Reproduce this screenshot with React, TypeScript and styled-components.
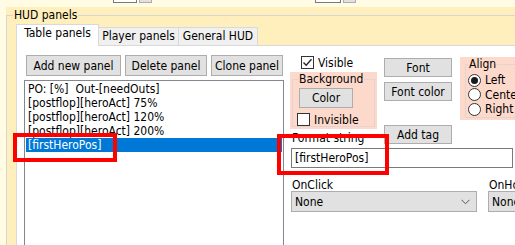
import React from 'react';
import styled, { createGlobalStyle } from 'styled-components';

const FONT = `Tahoma, "DejaVu Sans Condensed", "Liberation Sans", sans-serif`;

const GlobalStyle = createGlobalStyle`
  html, body { margin: 0; padding: 0; background: #fffce3; }
  body { font-family: ${FONT}; font-size: 12px; color: #000; }
  * { box-sizing: border-box; }
`;

const Screen = styled.div`
  position: relative;
  width: 515px;
  height: 245px;
  overflow: hidden;
  background: #fffce3;
  display: flex;
  flex-direction: column;
`;

const TopStrip = styled.div`
  height: 7px;
  flex: none;
  display: flex;
  align-items: flex-start;
`;

const TopControls = styled.div<{ $ml: number }>`
  display: flex;
  gap: 2px;
  margin-top: -17px;
  margin-left: ${(p) => p.$ml}px;
`;

const MiniInput = styled.div<{ $w: number }>`
  width: ${(p) => p.$w}px;
  height: 20px;
  background: #fff;
  border: 1px solid #7a7a7a;
`;

const MiniButton = styled.div`
  width: 13px;
  height: 20px;
  background: #e1e1e1;
  border: 1px solid #adadad;
`;

const GroupWrap = styled.div`
  flex: 1;
  min-height: 0;
  margin-left: 6px;
  background: #ffefbc;
  padding-top: 1px;
  display: flex;
`;

const Group = styled.fieldset`
  flex: 1;
  min-width: 0;
  margin: 0;
  padding: 0;
  border: 1px solid #d6d6d6;
  border-right: none;
  border-bottom: none;
  display: flex;
  flex-direction: column;
`;

const Legend = styled.legend<{ $ml: number }>`
  margin-left: ${(p) => p.$ml}px;
  padding: 0 1px;
  line-height: 14px;
  font-size: 12px;
`;

const GroupBody = styled.div`
  flex: 1;
  display: flex;
  flex-direction: column;
  padding-left: 9px;
`;

const TabStrip = styled.div`
  display: flex;
  align-items: flex-end;
  height: 21px;
  margin-top: 2px;
  flex: none;
`;

const Tab = styled.div<{ $active?: boolean; $w: number }>`
  position: relative;
  z-index: ${(p) => (p.$active ? 2 : 1)};
  width: ${(p) => p.$w}px;
  height: ${(p) => (p.$active ? 22 : 18)}px;
  margin-bottom: ${(p) => (p.$active ? -1 : 0)}px;
  margin-left: -1px;
  &:first-child { margin-left: 0; }
  background: ${(p) => (p.$active ? '#ffffff' : '#f0f0f0')};
  border: 1px solid #d9d9d9;
  border-bottom: none;
  line-height: 17px;
  text-align: center;
  white-space: nowrap;
`;

const TabPage = styled.div`
  flex: 1;
  background: #fff;
  border-top: 1px solid #d9d9d9;
  border-left: 1px solid #d9d9d9;
  display: flex;
  align-items: flex-start;
  gap: 6px;
  padding: 0 0 0 7px;
`;

const LeftCol = styled.div`
  width: 260px;
  flex: none;
  display: flex;
  flex-direction: column;
  padding-top: 9px;
`;

const ButtonRow = styled.div`
  display: flex;
  gap: 4px;
  padding-left: 2px;
`;

const Button = styled.div<{ $w: number; $h?: number }>`
  width: ${(p) => p.$w}px;
  height: ${(p) => p.$h ?? 21}px;
  background: #e1e1e1;
  border: 1px solid #adadad;
  display: flex;
  align-items: center;
  justify-content: center;
  white-space: nowrap;
  flex: none;
`;

const ListBox = styled.div`
  margin-top: 4px;
  height: 200px;
  border: 1px solid #828790;
  padding: 1px;
  flex: none;
`;

const ListItem = styled.div<{ $selected?: boolean }>`
  height: 14px;
  line-height: 14px;
  padding-left: 2px;
  white-space: pre;
  background: ${(p) => (p.$selected ? '#0078d7' : 'transparent')};
  color: ${(p) => (p.$selected ? '#fff' : '#000')};
`;

const RightCol = styled.div`
  width: 240px;
  flex: none;
  display: flex;
  flex-direction: column;
`;

const TopRow = styled.div`
  display: flex;
  align-items: flex-start;
`;

const ColA = styled.div`
  width: 87px;
  flex: none;
  display: flex;
  flex-direction: column;
`;

const ColB = styled.div`
  width: 68px;
  flex: none;
  margin-left: 7px;
  display: flex;
  flex-direction: column;
`;

const ColC = styled.div`
  flex: none;
  margin-left: 8px;
  margin-top: 11px;
`;

const CheckRow = styled.div<{ $mt: number; $pl: number }>`
  display: flex;
  align-items: center;
  gap: 4px;
  height: 13px;
  margin-top: ${(p) => p.$mt}px;
  padding-left: ${(p) => p.$pl}px;
  white-space: nowrap;
`;

const CheckBox = styled.div`
  width: 13px;
  height: 13px;
  border: 1px solid #333;
  background: #fff;
  flex: none;
  display: flex;
  align-items: center;
  justify-content: center;
`;

const Salmon = styled.div<{ $mt: number; $w: number; $pl: number }>`
  margin-top: ${(p) => p.$mt}px;
  width: ${(p) => p.$w}px;
  background: #fdd9cb;
  padding: 0 2px 2px ${(p) => p.$pl}px;
`;

const SubGroup = styled.fieldset<{ $h: number }>`
  margin: 0;
  padding: 0;
  height: ${(p) => p.$h}px;
  border: 1px solid #e4d4d0;
  min-width: 0;
`;

const SubBody = styled.div<{ $pl: number }>`
  padding-left: ${(p) => p.$pl}px;
  display: flex;
  flex-direction: column;
`;

const Spaced = styled.div<{ $mt: number }>`
  margin-top: ${(p) => p.$mt}px;
`;

const RadioRow = styled.div`
  display: flex;
  align-items: center;
  gap: 4px;
  height: 14.5px;
  white-space: nowrap;
`;

const Radio = styled.div<{ $on?: boolean }>`
  width: 13px;
  height: 13px;
  border-radius: 50%;
  border: 1px solid #333;
  background: #fff;
  flex: none;
  display: flex;
  align-items: center;
  justify-content: center;
  &::after {
    content: '';
    display: ${(p) => (p.$on ? 'block' : 'none')};
    width: 7px;
    height: 7px;
    border-radius: 50%;
    background: #1a1a1a;
  }
`;

const Label = styled.div<{ $mt: number }>`
  margin-top: ${(p) => p.$mt}px;
  padding-left: 2px;
  line-height: 14px;
  white-space: nowrap;
`;

const TextBox = styled.div`
  margin-top: 3px;
  margin-left: 1px;
  width: 222px;
  height: 20px;
  border: 1px solid #7a7a7a;
  padding-left: 3px;
  line-height: 18px;
  background: #fff;
`;

const BottomRow = styled.div`
  display: flex;
  margin-top: 10px;
  margin-left: 1px;
`;

const Field = styled.div<{ $ml: number }>`
  display: flex;
  flex-direction: column;
  margin-left: ${(p) => p.$ml}px;
  flex: none;
`;

const FieldLabel = styled.div`
  line-height: 14px;
  padding-left: 1px;
  white-space: nowrap;
`;

const Select = styled.div<{ $w: number }>`
  margin-top: -1px;
  width: ${(p) => p.$w}px;
  height: 21px;
  background: #e1e1e1;
  border: 1px solid #adadad;
  display: flex;
  align-items: center;
  justify-content: space-between;
  padding: 0 6px 0 3px;
`;

const RedBox = styled.div<{ $x: number; $y: number; $w: number; $h: number }>`
  position: absolute;
  left: ${(p) => p.$x}px;
  top: ${(p) => p.$y}px;
  width: ${(p) => p.$w}px;
  height: ${(p) => p.$h}px;
  border: 4px solid #ff0000;
  pointer-events: none;
  z-index: 10;
`;

const Check = () => (
  <svg width="11" height="11" viewBox="0 0 11 11">
    <polyline points="1.5,5.5 4.2,8.3 9.5,2.2" fill="none" stroke="#222" strokeWidth="1.3" />
  </svg>
);

const Chevron = () => (
  <svg width="9" height="6" viewBox="0 0 9 6">
    <polyline points="0.5,0.8 4.5,4.8 8.5,0.8" fill="none" stroke="#555" strokeWidth="1" />
  </svg>
);

const items = [
  'PO: [%]  Out-[needOuts]',
  '[postflop][heroAct] 75%',
  '[postflop][heroAct] 120%',
  '[postflop][heroAct] 200%',
  '[firstHeroPos]',
];

export default function App() {
  return (
    <>
      <GlobalStyle />
      <Screen>
        <TopStrip>
          <TopControls $ml={113}>
            <MiniInput $w={24} />
            <MiniButton />
          </TopControls>
          <TopControls $ml={163}>
            <MiniInput $w={26} />
            <MiniButton />
          </TopControls>
        </TopStrip>
        <GroupWrap>
          <Group>
            <Legend $ml={6}>HUD panels</Legend>
            <GroupBody>
              <TabStrip>
                <Tab $active $w={83}>Table panels</Tab>
                <Tab $w={81}>Player panels</Tab>
                <Tab $w={80}>General HUD</Tab>
              </TabStrip>
              <TabPage>
                <LeftCol>
                  <ButtonRow>
                    <Button $w={95}>Add new panel</Button>
                    <Button $w={82}>Delete panel</Button>
                    <Button $w={72}>Clone panel</Button>
                  </ButtonRow>
                  <ListBox>
                    {items.map((t, i) => (
                      <ListItem key={i} $selected={i === items.length - 1}>
                        {t}
                      </ListItem>
                    ))}
                  </ListBox>
                </LeftCol>
                <RightCol>
                  <TopRow>
                    <ColA>
                      <CheckRow $mt={10} $pl={11}>
                        <CheckBox>
                          <Check />
                        </CheckBox>
                        Visible
                      </CheckRow>
                      <Salmon $mt={3} $w={87} $pl={2}>
                        <SubGroup $h={55}>
                          <Legend $ml={5}>Background</Legend>
                          <SubBody $pl={6}>
                            <Spaced $mt={2}>
                              <Button $w={54} $h={20}>Color</Button>
                            </Spaced>
                          </SubBody>
                          <CheckRow $mt={5} $pl={4}>
                            <CheckBox />
                            Invisible
                          </CheckRow>
                        </SubGroup>
                      </Salmon>
                      <Label $mt={2}>Format string</Label>
                    </ColA>
                    <ColB>
                      <Spaced $mt={12}>
                        <Button $w={68} $h={19}>Font</Button>
                      </Spaced>
                      <Spaced $mt={5}>
                        <Button $w={68} $h={19}>Font color</Button>
                      </Spaced>
                      <Spaced $mt={24}>
                        <Button $w={68} $h={19}>Add tag</Button>
                      </Spaced>
                    </ColB>
                    <ColC>
                      <Salmon $mt={0} $w={80} $pl={5}>
                        <SubGroup $h={61}>
                          <Legend $ml={2}>Align</Legend>
                          <SubBody $pl={2}>
                            <Spaced $mt={2}>
                              <RadioRow>
                                <Radio $on />
                                Left
                              </RadioRow>
                              <RadioRow>
                                <Radio />
                                Center
                              </RadioRow>
                              <RadioRow>
                                <Radio />
                                Right
                              </RadioRow>
                            </Spaced>
                          </SubBody>
                        </SubGroup>
                      </Salmon>
                    </ColC>
                  </TopRow>
                  <TextBox>[firstHeroPos]</TextBox>
                  <BottomRow>
                    <Field $ml={0}>
                      <FieldLabel>OnClick</FieldLabel>
                      <Select $w={186}>
                        None
                        <Chevron />
                      </Select>
                    </Field>
                    <Field $ml={11}>
                      <FieldLabel>OnHover</FieldLabel>
                      <Select $w={100}>
                        None
                        <Chevron />
                      </Select>
                    </Field>
                  </BottomRow>
                </RightCol>
              </TabPage>
            </GroupBody>
          </Group>
        </GroupWrap>
        <RedBox $x={13} $y={133} $w={104} $h={29} />
        <RedBox $x={277} $y={134} $w={112} $h={41} />
      </Screen>
    </>
  );
}
